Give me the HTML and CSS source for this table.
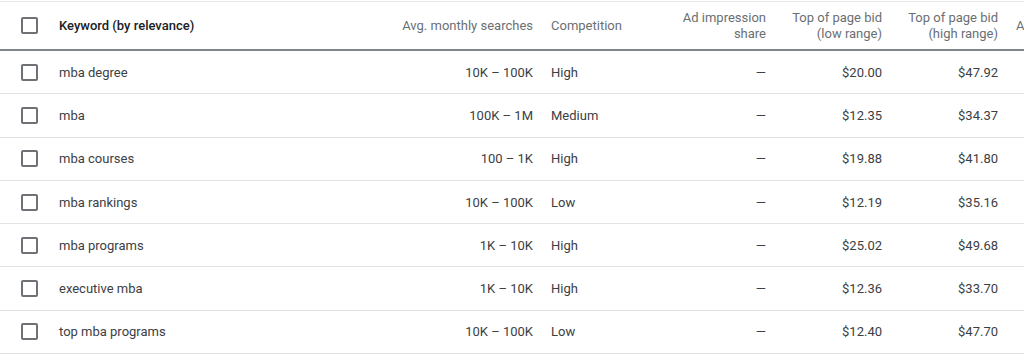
FILE: index.html
```html
<!DOCTYPE html>
<html lang="en">
<head>
  <meta charset="UTF-8">
  <title>Keyword ideas</title>
  <link rel="stylesheet" href="styles.css">
</head>
<body>
  <!-- Tabela de palavras-chave -->
  <div class="table">
    <div class="row head">
      <div class="cell check"><span class="box"></span></div>
      <div class="cell keyword">Keyword (by relevance)</div>
      <div class="cell num avg">Avg. monthly searches</div>
      <div class="cell comp">Competition</div>
      <div class="cell num">Ad impression<br>share</div>
      <div class="cell num">Top of page bid<br>(low range)</div>
      <div class="cell num">Top of page bid<br>(high range)</div>
      <div class="cell extra">A</div>
    </div>

    <div class="row">
      <div class="cell check"><span class="box"></span></div>
      <div class="cell keyword">mba degree</div>
      <div class="cell num avg">10K – 100K</div>
      <div class="cell comp">High</div>
      <div class="cell num">—</div>
      <div class="cell num">$20.00</div>
      <div class="cell num">$47.92</div>
      <div class="cell extra"></div>
    </div>
    <div class="row">
      <div class="cell check"><span class="box"></span></div>
      <div class="cell keyword">mba</div>
      <div class="cell num avg">100K – 1M</div>
      <div class="cell comp">Medium</div>
      <div class="cell num">—</div>
      <div class="cell num">$12.35</div>
      <div class="cell num">$34.37</div>
      <div class="cell extra"></div>
    </div>
    <div class="row">
      <div class="cell check"><span class="box"></span></div>
      <div class="cell keyword">mba courses</div>
      <div class="cell num avg">100 – 1K</div>
      <div class="cell comp">High</div>
      <div class="cell num">—</div>
      <div class="cell num">$19.88</div>
      <div class="cell num">$41.80</div>
      <div class="cell extra"></div>
    </div>
    <div class="row">
      <div class="cell check"><span class="box"></span></div>
      <div class="cell keyword">mba rankings</div>
      <div class="cell num avg">10K – 100K</div>
      <div class="cell comp">Low</div>
      <div class="cell num">—</div>
      <div class="cell num">$12.19</div>
      <div class="cell num">$35.16</div>
      <div class="cell extra"></div>
    </div>
    <div class="row">
      <div class="cell check"><span class="box"></span></div>
      <div class="cell keyword">mba programs</div>
      <div class="cell num avg">1K – 10K</div>
      <div class="cell comp">High</div>
      <div class="cell num">—</div>
      <div class="cell num">$25.02</div>
      <div class="cell num">$49.68</div>
      <div class="cell extra"></div>
    </div>
    <div class="row">
      <div class="cell check"><span class="box"></span></div>
      <div class="cell keyword">executive mba</div>
      <div class="cell num avg">1K – 10K</div>
      <div class="cell comp">High</div>
      <div class="cell num">—</div>
      <div class="cell num">$12.36</div>
      <div class="cell num">$33.70</div>
      <div class="cell extra"></div>
    </div>
    <div class="row">
      <div class="cell check"><span class="box"></span></div>
      <div class="cell keyword">top mba programs</div>
      <div class="cell num avg">10K – 100K</div>
      <div class="cell comp">Low</div>
      <div class="cell num">—</div>
      <div class="cell num">$12.40</div>
      <div class="cell num">$47.70</div>
      <div class="cell extra"></div>
    </div>
  </div>
</body>
</html>
```

FILE: styles.css
```css
/* Reset básico */
* {
  margin: 0;
  padding: 0;
  box-sizing: border-box;
}
body {
  font-family: Roboto, "Liberation Sans", sans-serif;
  font-size: 13px;
  color: #3c4043;
  background: #fff;
  overflow: hidden;
}
/* Tabela */
.table {
  border-top: 1px solid #e8e8e8;
  margin-top: 1px;
}
.row {
  display: grid;
  grid-template-columns: 51px 1fr 160px 108px 123px 116px 116px 18px;
  align-items: center;
  height: 43.3px;
  border-bottom: 1px solid #e3e3e3;
}
.row.head {
  height: 49px;
  border-bottom: 2px solid #80868b;
  color: #6b6f73;
  line-height: 16px;
}
.cell {
  padding: 0 8px;
  white-space: nowrap;
}
.cell.num {
  text-align: right;
}
.cell.avg {
  padding-right: 10px;
}
.cell.comp {
  padding-left: 8px;
}
.cell.extra {
  padding: 0 0 0 10px;
  overflow: hidden;
}
.head .keyword {
  font-weight: 500;
  color: #202124;
}
/* Caixa de seleção */
.cell.check {
  padding: 0 0 0 21px;
  display: flex;
}
.box {
  width: 17px;
  height: 17px;
  border: 2px solid #6e7276;
  border-radius: 2px;
}
```
